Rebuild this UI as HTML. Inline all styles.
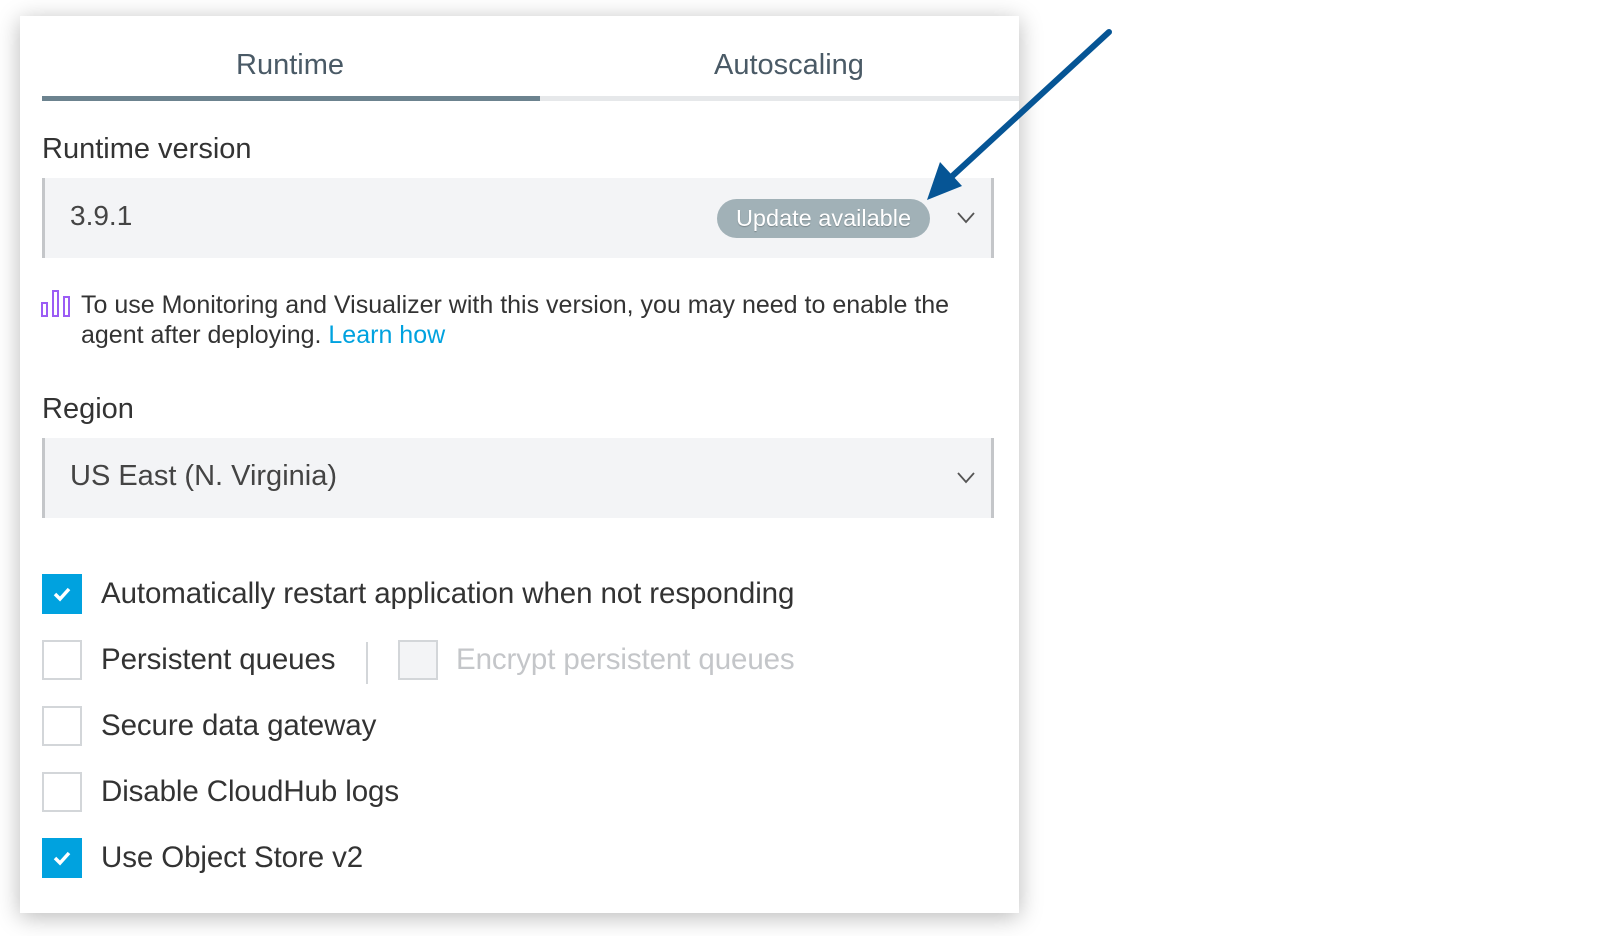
<!DOCTYPE html>
<html><head><meta charset="utf-8"><style>
*{margin:0;padding:0;box-sizing:border-box}
body{width:1618px;height:936px;background:#fff;position:relative;overflow:hidden;font-family:"Liberation Sans",sans-serif;color:#3a3a3a}
.panel{position:absolute;left:20px;top:16px;width:999px;height:897px;background:#fff;box-shadow:0 4px 22px rgba(0,0,0,.28)}
.abs{position:absolute;white-space:nowrap}
.tab{font-size:29px;color:#4a5a66;top:48px}
.sel{position:absolute;left:42px;width:952px;height:80px;background:#f3f4f6;border-left:3px solid #c4c6c9;border-right:3px solid #c4c6c9}
.lbl{font-size:29px;left:42px;color:#333}
.cb{position:absolute;left:42px;width:40px;height:40px;border:2px solid #d3d6d9;background:#fff}
.cb.on{background:#00a2df;border-color:#00a2df}
.ct{position:absolute;left:101px;font-size:29.5px;color:#333;white-space:nowrap;letter-spacing:-0.1px}
.chev{position:absolute;right:15px;top:32px}
</style></head><body>
<div class="panel"></div>
<div class="abs tab" style="left:236px;top:49px">Runtime</div>
<div class="abs tab" style="left:714px;top:49px">Autoscaling</div>
<div class="abs" style="left:42px;top:96px;width:977px;height:5px;background:#e6e8ea"></div>
<div class="abs" style="left:42px;top:96px;width:498px;height:5px;background:#6c838f"></div>
<div class="abs lbl" style="top:133px">Runtime version</div>
<div class="sel" style="top:178px">
 <div class="abs" style="left:25px;top:22px;font-size:28px;color:#444">3.9.1</div>
 <div class="abs" style="left:672px;top:21px;width:213px;height:39px;border-radius:20px;background:#a1b1b7;color:#fff;font-size:23.5px;line-height:39px;text-align:center;text-shadow:0 1px 1px rgba(0,0,0,.25)">Update available</div>
 <svg class="chev" width="20" height="14" viewBox="0 0 20 14"><path d="M2 3 L10 12 L18 3" fill="none" stroke="#555" stroke-width="1.8"/></svg>
</div>
<svg class="abs" style="left:41px;top:289px" width="30" height="28" viewBox="0 0 30 28"><g fill="none" stroke="#9b5cf5" stroke-width="2"><rect x="1" y="14" width="5" height="13"/><rect x="12" y="2" width="5" height="25"/><rect x="23" y="8" width="5" height="19"/></g></svg>
<div class="abs" style="left:81px;top:290px;font-size:25px;line-height:30px;color:#333;letter-spacing:0px">To use Monitoring and Visualizer with this version, you may need to enable the<br>agent after deploying. <span style="color:#00a2df">Learn how</span></div>
<div class="abs lbl" style="top:393px">Region</div>
<div class="sel" style="top:438px">
 <div class="abs" style="left:25px;top:22px;font-size:29px;color:#444">US East (N. Virginia)</div>
 <svg class="chev" width="20" height="14" viewBox="0 0 20 14"><path d="M2 3 L10 12 L18 3" fill="none" stroke="#555" stroke-width="1.8"/></svg>
</div>
<div class="cb on" style="top:574px"><svg width="36" height="36" viewBox="0 0 36 36"><path d="M11 18 L16 23 L25 13" fill="none" stroke="#fff" stroke-width="3.5"/></svg></div>
<div class="ct" style="top:577px">Automatically restart application when not responding</div>
<div class="cb" style="top:640px"></div>
<div class="ct" style="top:643px">Persistent queues</div>
<div class="abs" style="left:366px;top:642px;width:2px;height:42px;background:#d3d6d9"></div>
<div class="cb" style="top:640px;left:398px;background:#f3f4f6"></div>
<div class="ct" style="top:643px;left:456px;color:#c4c6c9">Encrypt persistent queues</div>
<div class="cb" style="top:706px"></div>
<div class="ct" style="top:709px">Secure data gateway</div>
<div class="cb" style="top:772px"></div>
<div class="ct" style="top:775px">Disable CloudHub logs</div>
<div class="cb on" style="top:838px"><svg width="36" height="36" viewBox="0 0 36 36"><path d="M11 18 L16 23 L25 13" fill="none" stroke="#fff" stroke-width="3.5"/></svg></div>
<div class="ct" style="top:841px">Use Object Store v2</div>
<svg class="abs" style="left:0;top:0" width="1618" height="936"><line x1="1109" y1="32" x2="948" y2="180" stroke="#065595" stroke-width="6" stroke-linecap="round"/><polygon points="927,200 940,162 962,186" fill="#065595"/></svg>
</body></html>
